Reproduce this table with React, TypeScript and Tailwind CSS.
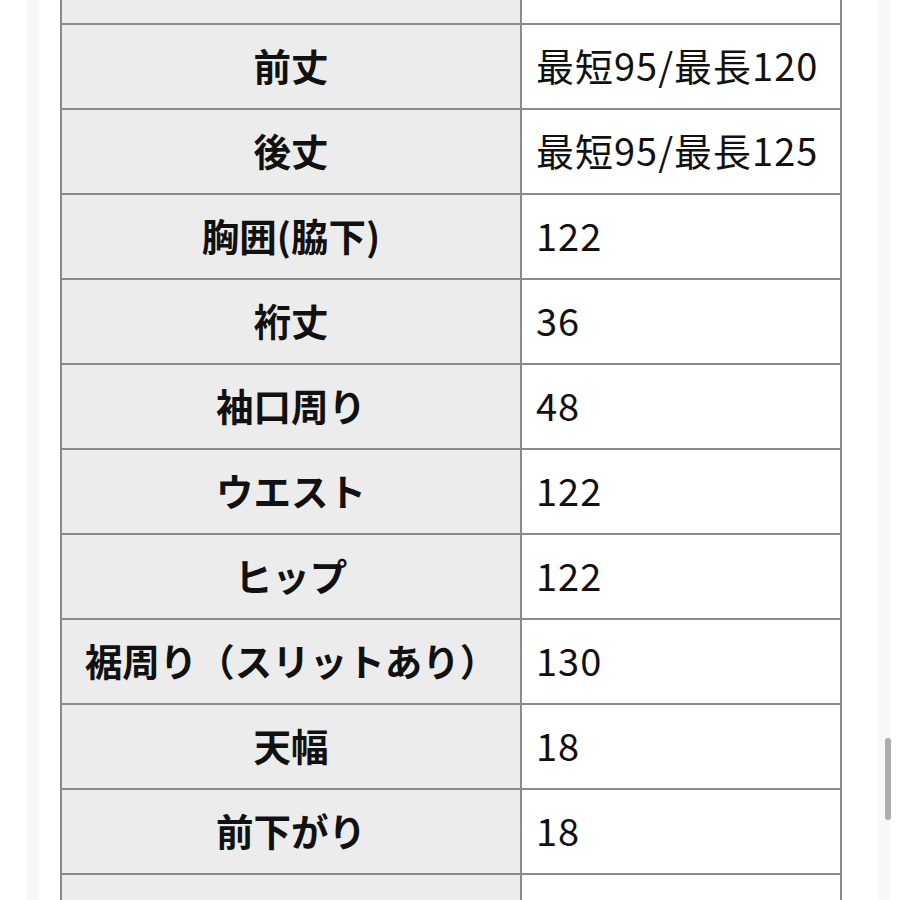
import React from "react";

const rows: [string, string][] = [
  ["", ""],
  ["前丈", "最短95/最長120"],
  ["後丈", "最短95/最長125"],
  ["胸囲(脇下)", "122"],
  ["裄丈", "36"],
  ["袖口周り", "48"],
  ["ウエスト", "122"],
  ["ヒップ", "122"],
  ["裾周り（スリットあり）", "130"],
  ["天幅", "18"],
  ["前下がり", "18"],
  ["", ""],
];

const App: React.FC = () => {
  return (
    <div
      className="relative w-[900px] h-[900px] overflow-hidden bg-white text-[#111]"
      style={{ fontFamily: '"Noto Sans CJK JP", "Noto Sans", sans-serif' }}
    >
      {/* Faint page gutters */}
      <div className="flex h-full">
        <div className="w-[27px]" />
        <div className="w-[12px] bg-[#f8f8f8]" />
        <div className="flex-1">
          <table className="-mt-[62px] ml-[21px] w-[780px] border-collapse table-fixed">
            <colgroup>
              <col className="w-[460px]" />
              <col className="w-[320px]" />
            </colgroup>
            <tbody>
              {rows.map(([label, value], i) => (
                <tr key={i} className="h-[85px]">
                  <td className="border-2 border-[#8a8a8a] bg-[#ececec] pb-[4px] text-center text-[37.5px] font-bold leading-none">
                    {label}
                  </td>
                  <td className="border-2 border-[#8a8a8a] bg-white pb-[4px] pl-[14px] text-[38px] font-normal leading-none tracking-[1px]">
                    {value}
                  </td>
                </tr>
              ))}
            </tbody>
          </table>
        </div>
        <div className="w-[12px] bg-[#f8f8f8]" />
        <div className="w-[10px]" />
      </div>

      {/* Scrollbar thumb */}
      <div className="absolute left-[885px] top-[738px] h-[82px] w-[6px] rounded-full bg-[#ababab]" />
    </div>
  );
};

export default App;
